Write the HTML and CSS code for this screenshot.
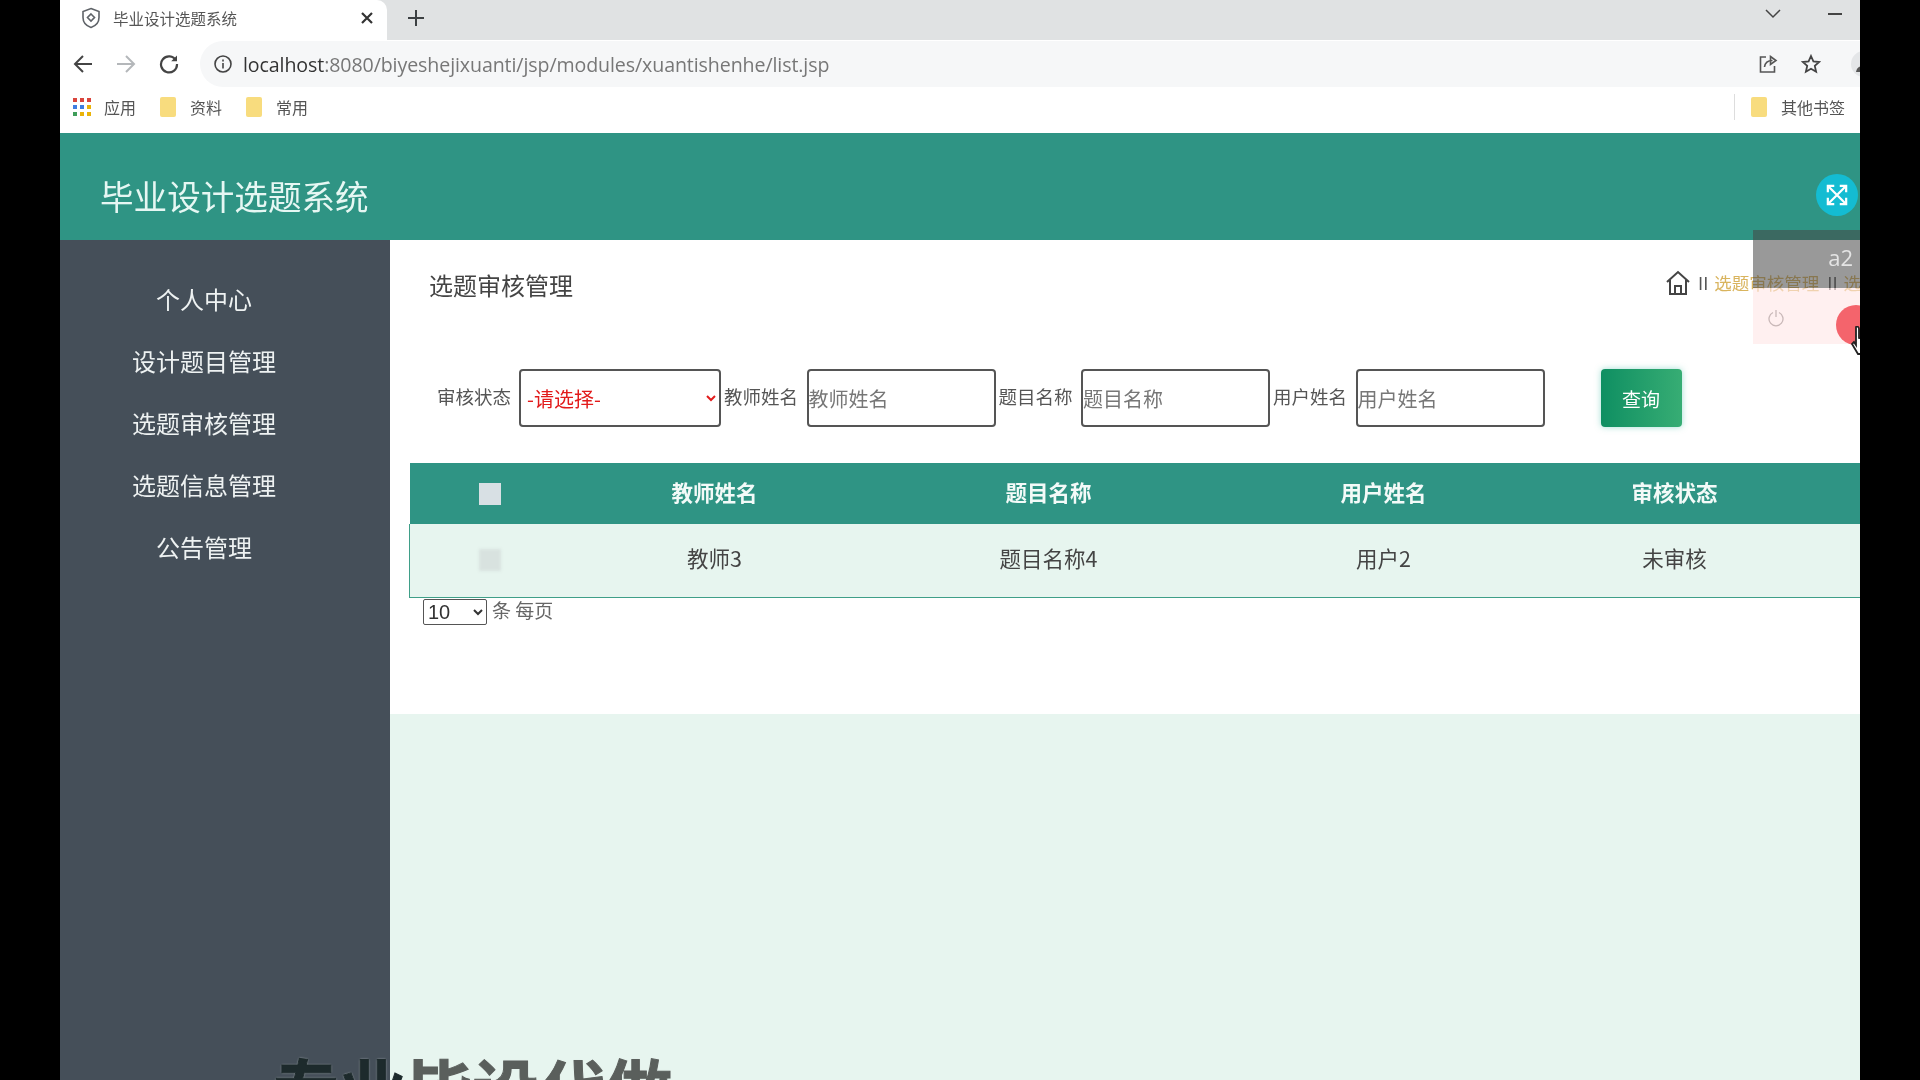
FILE: index.html
```html
<!DOCTYPE html>
<html lang="en">
<head>
  <meta charset="UTF-8">
  <title>毕业设计选题系统</title>
  <link rel="stylesheet" href="styles.css">
</head>
<body>
<div class="screen">

  <!-- browser chrome -->
  <div class="tabstrip">
    <div class="tab">
      <svg class="favicon" width="20" height="22" viewBox="0 0 20 22" fill="none" stroke="#5f6368" stroke-width="1.6"><path d="M10 1.5l8 3v6c0 5-3.4 8.400-8 10-4.600-1.600-8-5-8-10v-6z"/><path d="M10 7l3.500 3.500L10 14l-3.500-3.500z"/></svg>
      <span class="tab-title">毕业设计选题系统</span>
      <svg class="tab-close" width="12" height="12" viewBox="0 0 12 12" stroke="#333" stroke-width="2.2"><path d="M1 1l10 10M11 1L1 11"/></svg>
    </div>
    <svg class="tab-new" width="16" height="16" viewBox="0 0 16 16" stroke="#3c4043" stroke-width="2"><path d="M8 0v16M0 8h16"/></svg>
    <svg class="tab-list" width="16" height="10" viewBox="0 0 16 10" fill="none" stroke="#444" stroke-width="1.500"><path d="M1 1l7 7 7-7"/></svg>
    <div class="win-min"></div>
  </div>

  <div class="toolbar">
    <svg class="nav-icon" width="20" height="20" viewBox="0 0 20 20" fill="none" stroke="#444" stroke-width="2"><path d="M19 10H2M10 2l-8 8 8 8"/></svg>
    <svg class="nav-icon" width="20" height="20" viewBox="0 0 20 20" fill="none" stroke="#b4b7ba" stroke-width="2"><path d="M1 10h17M10 2l8 8-8 8"/></svg>
    <svg class="nav-icon" width="20" height="20" viewBox="0 0 20 20" fill="none" stroke="#444" stroke-width="2.200"><path d="M17 6.500A8 8 0 1 0 18 10"/><path d="M18 1.500v5.800h-5.800z" stroke="none" fill="#444"/></svg>
    <div class="address">
      <svg width="20" height="20" viewBox="0 0 20 20" fill="none" stroke="#444" stroke-width="1.600"><circle cx="10" cy="10" r="8"/><path d="M10 9v5.500M10 5.500v2"/></svg>
      <span class="url"><b>localhost</b>:8080/biyeshejixuanti/jsp/modules/xuantishenhe/list.jsp</span>
      <svg class="share" width="20" height="20" viewBox="0 0 20 20" fill="none" stroke="#555" stroke-width="1.600"><path d="M8 3H2.500v15h14v-6"/><path d="M6.500 13c.5-4 3.500-6.500 8-6.500M12.500 2.500l5.500 4-5.500 4z"/></svg>
      <svg class="star" width="20" height="20" viewBox="0 0 20 20" fill="none" stroke="#444" stroke-width="1.800"><path d="M10 2l2.400 5.400 5.800.6-4.400 3.900 1.300 5.800L10 14.700l-5.100 3 1.300-5.800L1.800 8l5.800-.6z"/></svg>
      <svg class="avatar" width="26" height="26" viewBox="0 0 26 26"><circle cx="13" cy="13" r="13" fill="#e4e6e8"/><circle cx="13" cy="10" r="4" fill="#555"/><path d="M5 21c1-5 4-6 8-6s7 1 8 6z" fill="#555"/></svg>
    </div>
  </div>

  <div class="bookmarks">
    <svg class="apps" width="18" height="18" viewBox="0 0 18 18">
      <rect width="4" height="4" fill="#d9453c"/><rect x="7" width="4" height="4" fill="#d9453c"/><rect x="14" width="4" height="4" fill="#d9453c"/>
      <rect y="7" width="4" height="4" fill="#3f7de0"/><rect x="7" y="7" width="4" height="4" fill="#3f7de0"/><rect x="14" y="7" width="4" height="4" fill="#eab308"/>
      <rect y="14" width="4" height="4" fill="#3f9e5a"/><rect x="7" y="14" width="4" height="4" fill="#eab308"/><rect x="14" y="14" width="4" height="4" fill="#eab308"/>
    </svg>
    <span class="mark">应用</span>
    <i class="folder"></i><span class="mark">资料</span>
    <i class="folder"></i><span class="mark">常用</span>
    <div class="bookmarks-right">
      <i class="folder"></i><span class="mark">其他书签</span>
    </div>
  </div>

  <!-- app -->
  <header class="app-header">
    <h1>毕业设计选题系统</h1>
    <button class="fullscreen">
      <svg width="22" height="22" viewBox="0 0 24 24" fill="none" stroke="#fff" stroke-width="2.400"><path d="M3 3l18 18M21 3L3 21"/><path d="M2 9V2h7M15 2h7v7M22 15v7h-7M9 22H2v-7"/></svg>
    </button>
  </header>

  <div class="app-body">
    <nav class="sidebar">
      <a>个人中心</a>
      <a>设计题目管理</a>
      <a>选题审核管理</a>
      <a>选题信息管理</a>
      <a>公告管理</a>
    </nav>

    <main class="content">
      <section class="panel">
        <div class="title-row">
          <h2>选题审核管理</h2>
          <div class="crumbs">
            <svg width="24" height="26" viewBox="0 0 24 26" fill="none" stroke="#444" stroke-width="2"><path d="M1 12L12 2l11 10M4 10v14h16V10M9 24v-8h6v8"/></svg>
            <span class="sep">II</span>
            <span class="crumb">选题审核管理</span>
            <span class="sep">II</span>
            <span class="crumb">选题审核管理</span>
          </div>
        </div>

        <form class="filters">
          <label class="first">审核状态</label>
          <select class="status"><option>-请选择-</option></select>
          <label>教师姓名</label>
          <input type="text" placeholder="教师姓名">
          <label>题目名称</label>
          <input type="text" placeholder="题目名称">
          <label>用户姓名</label>
          <input type="text" placeholder="用户姓名">
          <button type="button" class="search">查询</button>
        </form>

        <table class="list">
          <colgroup>
            <col class="c-check"><col class="c-teacher"><col class="c-topic"><col class="c-user"><col class="c-state"><col class="c-rest">
          </colgroup>
          <thead>
            <tr>
              <th><input type="checkbox" class="check"></th>
              <th>教师姓名</th>
              <th>题目名称</th>
              <th>用户姓名</th>
              <th>审核状态</th>
              <th></th>
            </tr>
          </thead>
          <tbody>
            <tr>
              <td><input type="checkbox" class="check row-check"></td>
              <td>教师3</td>
              <td>题目名称4</td>
              <td>用户2</td>
              <td>未审核</td>
              <td></td>
            </tr>
          </tbody>
        </table>

        <div class="pager">
          <select><option>10</option></select>
          <span>条 每页</span>
        </div>
      </section>
    </main>
  </div>

  <!-- user dropdown, half faded in -->
  <div class="user-menu">
    <div class="user-name">a2</div>
    <div class="user-actions">
      <svg width="16" height="18" viewBox="0 0 16 18" fill="none" stroke="#c9b8b8" stroke-width="1.300"><path d="M5 3.500a7 7 0 1 0 6 0M8 1v7"/></svg>
    </div>
  </div>
  <div class="click-dot"></div>
  <svg class="pointer" width="20" height="30" viewBox="0 0 20 30" fill="#fff" stroke="#222" stroke-width="1.800"><path d="M5 1c1.500-1 3 0 3 2v9l5 1c3 1 4 3 3 7l-2 8H7L1 18l2-2 2 3z"/></svg>

  <div class="promo"><span class="promo-dark">专业</span>毕设代做</div>
</div>
</body>
</html>
```

FILE: styles.css
```css
* {
  box-sizing: border-box;
}
html, body {
  height: 100%;
}
body {
  margin: 0;
  background: #000;
  overflow: hidden;
  font-family: "Noto Sans CJK SC", "Noto Sans", sans-serif;
  color: #444;
}
/* the source is a video frame, so everything is slightly soft */
.screen {
  position: relative;
  width: 1800px;
  height: 1080px;
  margin-left: 60px;
  background: #fff;
  overflow: hidden;
  display: flex;
  flex-direction: column;
  filter: blur(0.5px);
}

/* browser chrome */
.tabstrip {
  height: 40px;
  background: #e0e2e3;
  display: flex;
  align-items: center;
  flex-shrink: 0;
}
.tab {
  width: 327px;
  height: 40px;
  background: #fff;
  border-top-right-radius: 10px;
  display: flex;
  align-items: center;
  padding: 0 0 5px 21px;
}
.tab-title {
  margin-left: 12px;
  font-size: 15.500px;
  color: #555;
}
.tab-close {
  margin-left: auto;
  margin-right: 14px;
}
.tab-new {
  margin: 0 0 5px 21px;
}
.tab-list {
  margin: 0 47px 13px auto;
}
.win-min {
  width: 14px;
  height: 2px;
  background: #444;
  margin: 0 18px 12px 0;
}
.toolbar {
  height: 48px;
  background: #fff;
  display: flex;
  align-items: center;
  padding-left: 13px;
  gap: 23px;
  flex-shrink: 0;
}
.address {
  flex: 1;
  height: 46px;
  background: #f6f7f8;
  border-radius: 23px 0 0 23px;
  margin-left: -2px;
  display: flex;
  align-items: center;
  padding-left: 13px;
}
.url {
  margin-left: 10px;
  font-family: "Open Sans", "Noto Sans", sans-serif;
  font-size: 19.600px;
  letter-spacing: -0.1px;
  color: #777;
}
.url b {
  font-weight: 400;
  color: #333;
}
.share {
  margin-left: auto;
}
.star {
  margin-left: 23px;
}
.avatar {
  flex-shrink: 0;
  margin: 0 -17px 0 30px;
}
.bookmarks {
  height: 45px;
  background: #fff;
  display: flex;
  align-items: center;
  padding: 0 0 7px 13px;
  flex-shrink: 0;
}
.apps {
  margin-right: 13px;
}
.mark {
  font-size: 16px;
  color: #555;
}
.folder {
  width: 16px;
  height: 20px;
  background: #f8dc7e;
  border-radius: 2px;
  margin-left: 24px;
  margin-right: 14px;
}
.bookmarks-right {
  margin-left: auto;
  padding-right: 15px;
  display: flex;
  align-items: center;
  border-left: 1px solid #ddd;
  height: 26px;
}
.bookmarks-right .folder {
  margin-left: 16px;
}

/* app header */
.app-header {
  height: 107px;
  background: #2f9484;
  display: flex;
  align-items: center;
  padding-left: 40px;
  flex-shrink: 0;
  position: relative;
}
.app-header h1 {
  margin: 0 0 -17px;
  font-size: 33.600px;
  font-weight: 400;
  color: #e6f7f3;
}
.fullscreen {
  position: absolute;
  right: 2px;
  top: 41px;
  width: 42px;
  height: 42px;
  border: 0;
  border-radius: 50%;
  background: #14bcd2;
  display: flex;
  align-items: center;
  justify-content: center;
  padding: 0;
}

.app-body {
  flex: 1;
  display: flex;
  min-height: 0;
}
.sidebar {
  width: 330px;
  background: #454f59;
  flex-shrink: 0;
  padding-top: 29px;
  display: flex;
  flex-direction: column;
  align-items: center;
  padding-right: 42px;
}
.sidebar a {
  height: 62px;
  line-height: 60px;
  font-size: 24px;
  color: #eef2f2;
}
.content {
  flex: 1;
  min-width: 0;
  background: #e7f5ef;
  overflow: hidden;
}
.panel {
  height: 474px;
  background: #fff;
  padding: 0 0 0 20px;
}
.title-row {
  display: flex;
  align-items: center;
  height: 90px;
  padding: 0 0 2px 19px;
}
.title-row h2 {
  margin: 0;
  font-size: 24px;
  font-weight: 400;
  color: #444;
  flex-shrink: 0;
  width: 144px;
}
.crumbs {
  display: flex;
  align-items: center;
  flex-shrink: 0;
  margin: 0 0 3px 1093px;
  font-size: 17.500px;
  white-space: nowrap;
}
.sep {
  margin: 0 6px 0 8px;
  color: #555;
}
.crumb {
  color: #d9b45e;
}

/* search row */
.filters {
  display: flex;
  align-items: center;
  margin-top: 39px;
  height: 58px;
}
.filters label {
  font-size: 18.500px;
  color: #555;
  width: 75.500px;
  margin: -4px 7px 0 3px;
  white-space: nowrap;
  flex-shrink: 0;
}
.filters .first {
  margin-left: 27px;
  margin-right: 6.500px;
}
.filters select,
.filters input {
  height: 58px;
  border: 2px solid #555;
  border-radius: 4px;
  background: #fff;
  font-family: inherit;
  font-size: 20px;
  flex-shrink: 0;
}
.status {
  width: 202px;
  color: #e21b1b;
  padding-left: 2px;
}
.filters input {
  width: 189px;
  padding: 0;
}
.filters input::placeholder {
  color: #777;
}
.search {
  width: 81px;
  height: 58px;
  margin-left: 56px;
  border: 0;
  border-radius: 4px;
  background: linear-gradient(90deg, #0f8f62, #37ad74);
  box-shadow: 0 0 6px rgba(70, 190, 170, 0.5);
  color: #fff;
  font-family: inherit;
  font-size: 19px;
  flex-shrink: 0;
}

/* table */
.list {
  margin: 36px 0 0 -1px;
  table-layout: fixed;
  width: 1600px;
  border-collapse: collapse;
  font-size: 21.500px;
}
.c-check { width: 160px; }
.c-teacher { width: 290px; }
.c-topic { width: 378px; }
.c-user { width: 292px; }
.c-state { width: 290px; }
.list th {
  height: 61px;
  padding: 0 0 5px;
  background: #2f9484;
  color: #f3faf8;
  font-weight: 700;
}
.list th:first-child,
.list td:first-child {
  padding-bottom: 0;
}
.list td {
  height: 73px;
  padding: 0 0 6px;
  background: #e7f5ef;
  text-align: center;
  color: #444;
  border-bottom: 1px solid #3f9f88;
}
.list td:first-child {
  border-left: 1px solid #3f9f88;
}
.check {
  appearance: none;
  display: block;
  width: 22px;
  height: 22px;
  margin: 0 auto;
  background: #d8e0e4;
}
.row-check {
  background: #d8e2df;
  filter: blur(1.500px);
}
.pager {
  display: flex;
  align-items: center;
  margin: 1px 0 0 13px;
  font-size: 19px;
  color: #666;
}
.pager span {
  margin-top: -4px;
}
.pager select {
  width: 64px;
  height: 26px;
  font-size: 20px;
  font-family: "Liberation Sans", sans-serif;
  color: #333;
  background: #fff;
  border: 1px solid #555;
  border-radius: 2px;
  margin-right: 5px;
}

/* overlays */
.user-menu {
  position: absolute;
  right: 0;
  top: 230px;
  width: 107px;
}
.user-name {
  height: 58px;
  padding: 12px 7px 0 0;
  text-align: right;
  font-family: "Open Sans", sans-serif;
  font-size: 22px;
  color: #e4e4e4;
  background: rgba(70, 70, 70, 0.55);
}
.user-actions {
  height: 56px;
  padding: 20px 0 0 15px;
  background: rgba(255, 230, 230, 0.6);
}
.click-dot {
  position: absolute;
  left: 1776px;
  top: 305px;
  width: 40px;
  height: 40px;
  border-radius: 50%;
  background: #f4646c;
}
.pointer {
  position: absolute;
  left: 1791px;
  top: 326px;
}
.promo {
  position: absolute;
  left: 213px;
  top: 1042px;
  font-size: 66.500px;
  line-height: 90px;
  font-weight: 700;
  color: #5a5f5c;
  white-space: nowrap;
  text-shadow: 0 0 2px #dfe6e3;
  -webkit-text-stroke: 1px currentColor;
}
.promo-dark {
  color: #1d2a2c;
}
```
